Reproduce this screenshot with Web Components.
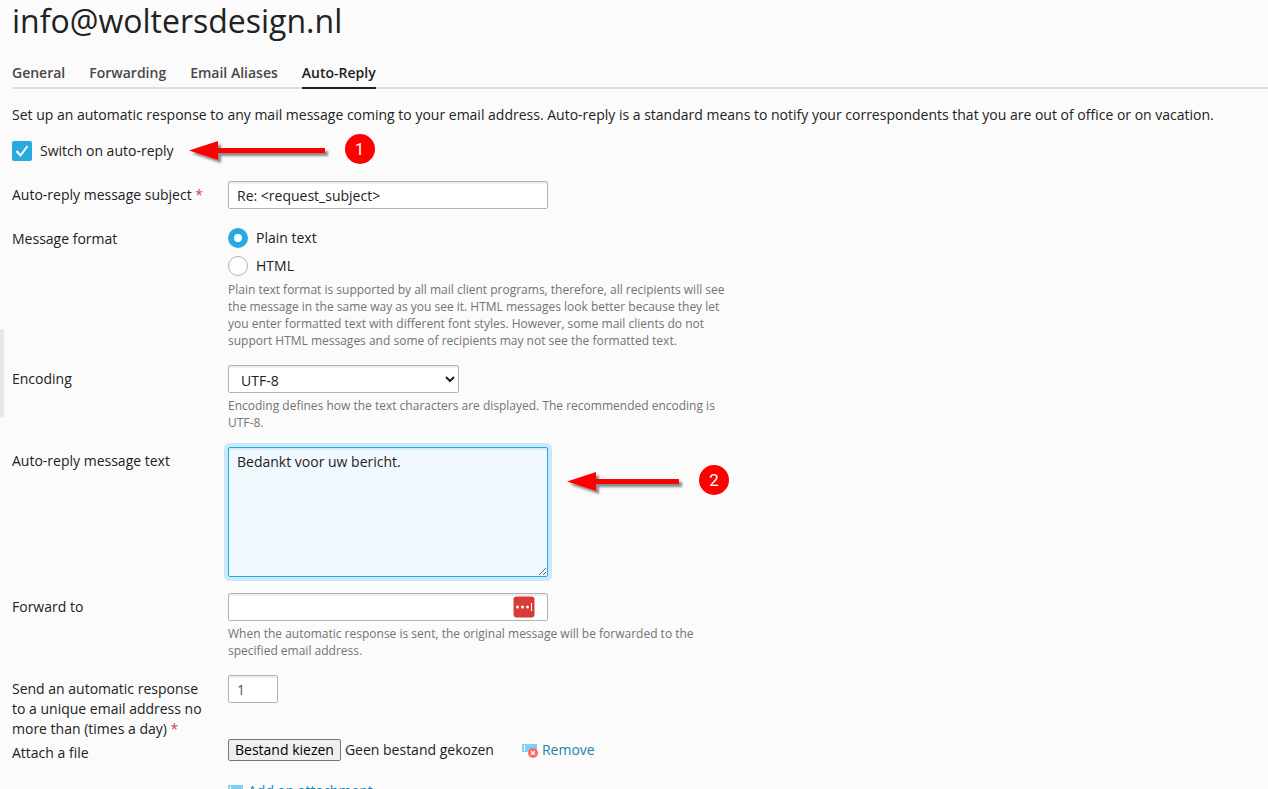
<!DOCTYPE html>
<html lang="en">
<head>
<meta charset="utf-8">
<title>info@woltersdesign.nl</title>
<style>
  body {
    margin: 0;
    background: #fbfbfb;
    color: #222;
    font: 14px/20px "Open Sans", "Noto Sans", sans-serif;
  }
</style>
</head>
<body>
<mail-settings></mail-settings>

<script>
const TABS = ["General", "Forwarding", "Email Aliases", "Auto-Reply"];

class PageTabs extends HTMLElement {
  constructor() {
    super();
    this.attachShadow({ mode: "open" });
  }

  static get styles() {
    return /* css */`
      :host {
        display: block;
      }

      nav {
        display: flex;
        gap: 24px;
        border-bottom: 2px solid #ddd;
      }

      a {
        padding-bottom: 4px;
        margin-bottom: -2px;
        border-bottom: 2px solid transparent;
        color: #484848;
        font-weight: 600;
        text-decoration: none;
      }

      a[aria-current] {
        border-color: #222;
        color: #222;
      }
    `;
  }

  connectedCallback() {
    this.render();
  }

  renderTabs() {
    const active = this.getAttribute("active");
    return TABS.map(name => /* html */`<a href="#"${name === active ? ` aria-current="page"` : ""}>${name}</a>`).join("");
  }

  render() {
    this.shadowRoot.innerHTML = /* html */`
    <style>${PageTabs.styles}</style>
    <nav>${this.renderTabs()}</nav>`;
  }
}

customElements.define("page-tabs", PageTabs);

class FormRow extends HTMLElement {
  constructor() {
    super();
    this.attachShadow({ mode: "open" });
  }

  static get styles() {
    return /* css */`
      :host {
        display: grid;
        grid-template-columns: 200px 1fr;
        column-gap: 16px;
        margin-bottom: 16px;
      }

      .label {
        padding-top: 4px;
      }

      .hint {
        max-width: 500px;
        margin-top: 4px;
        color: #737373;
        font-size: 12px;
        line-height: 17px;
      }
    `;
  }

  connectedCallback() {
    this.render();
  }

  render() {
    const hint = this.getAttribute("hint");
    this.shadowRoot.innerHTML = /* html */`
    <style>${FormRow.styles}</style>
    <div class="label"><slot name="label"></slot></div>
    <div>
      <slot></slot>
      ${hint ? `<div class="hint">${hint}</div>` : ""}
    </div>`;
  }
}

customElements.define("form-row", FormRow);

class StepMarker extends HTMLElement {
  constructor() {
    super();
    this.attachShadow({ mode: "open" });
  }

  static get styles() {
    return /* css */`
      :host {
        display: flex;
        align-items: center;
        gap: 15px;
      }

      svg {
        display: block;
      }

      .number {
        width: 30px;
        height: 30px;
        margin-bottom: 4px;
        border-radius: 50%;
        background: #f00;
        color: #fff;
        font-family: Roboto, sans-serif;
        font-size: 17px;
        line-height: 30px;
        text-align: center;
      }
    `;
  }

  connectedCallback() {
    this.render();
  }

  render() {
    const length = Number(this.getAttribute("length"));
    const width = length + 5;
    this.shadowRoot.innerHTML = /* html */`
    <style>${StepMarker.styles}</style>
    <svg width="${width}" height="26" viewBox="0 0 ${width} 26" aria-hidden="true">
      <defs>
        <filter id="shadow" x="-10%" y="-20%" width="120%" height="160%">
          <feDropShadow dx="3" dy="3" stdDeviation="1" flood-color="#000" flood-opacity=".45"/>
        </filter>
      </defs>
      <path d="M0 12.500 29 3v7h${length - 29}v5H29v7z" fill="#f00" filter="url(#shadow)"/>
    </svg>
    <div class="number">${this.getAttribute("number")}</div>`;
  }
}

customElements.define("step-marker", StepMarker);

class AttachmentLink extends HTMLElement {
  constructor() {
    super();
    this.attachShadow({ mode: "open" });
  }

  static get styles() {
    return /* css */`
      :host {
        display: block;
      }

      a {
        display: flex;
        align-items: center;
        gap: 4px;
        width: max-content;
        color: #1b82ae;
        text-decoration: none;
      }
    `;
  }

  connectedCallback() {
    this.render();
  }

  render() {
    const badge = /* html */`
      <circle cx="11" cy="11" r="5" fill="#ff6c5f"/>
      <path d="m9.200 9.200 3.600 3.600m0-3.600-3.600 3.600" stroke="#fff" stroke-width="1.400"/>`;
    this.shadowRoot.innerHTML = /* html */`
    <style>${AttachmentLink.styles}</style>
    <a href="#">
      <svg width="16" height="16" viewBox="0 0 16 16" aria-hidden="true">
        <path d="M0 2h15v8H0z" fill="#80d0f2"/>
        <path d="M2 3h1v6H2z" fill="#fff"/>
        ${this.hasAttribute("remove") ? badge : ""}
      </svg>
      <slot></slot>
    </a>`;
  }
}

customElements.define("attachment-link", AttachmentLink);

class MailSettings extends HTMLElement {
  constructor() {
    super();
    this.attachShadow({ mode: "open" });
  }

  static get styles() {
    return /* css */`
      :host {
        display: block;
        position: relative;
        box-sizing: border-box;
        height: 100vh;
        padding-left: 12px;
        overflow: hidden;
      }

      h1 {
        margin: 0 0 21px;
        font-size: 32px;
        font-weight: 400;
        line-height: 42px;
      }

      p {
        margin: 16px 0;
      }

      /* collapsed sidebar grip */
      .grip {
        position: absolute;
        top: 329px;
        left: 0;
        width: 4px;
        height: 88px;
        padding: 0;
        border: 0;
        border-radius: 0 3px 3px 0;
        background: #e6e6e6;
      }

      .switch {
        display: flex;
        align-items: center;
        gap: 15px;
        height: 20px;
        margin-bottom: 20px;
      }

      .choice {
        display: flex;
        align-items: center;
        gap: 8px;
        width: max-content;
      }

      .choices {
        display: grid;
        gap: 8px;
        padding: 3px 0 1px;
      }

      input, select, textarea {
        box-sizing: border-box;
        margin: 0;
        border: 1px solid #b3b3b3;
        border-radius: 2px;
        background: #fff;
        box-shadow: inset 0 2px 0 #eee;
        color: #222;
        font: inherit;
      }

      input[type="text"], input[type="email"] {
        display: block;
        width: 320px;
        height: 28px;
        padding: 0 8px;
      }

      input[type="text"].short {
        width: 50px;
        color: #555;
      }

      input[type="checkbox"], input[type="radio"] {
        appearance: none;
        width: 20px;
        height: 20px;
        box-shadow: none;
      }

      input[type="checkbox"]:checked {
        border: 0;
        background: #28aade url('data:image/svg+xml,<svg xmlns="http://www.w3.org/2000/svg" viewBox="0 0 20 20"><path d="m4.500 10 4 4.500L15.500 5" fill="none" stroke="white" stroke-width="2"/></svg>');
      }

      input[type="radio"] {
        border-radius: 50%;
      }

      input[type="radio"]:checked {
        border: 6px solid #28aade;
      }

      select {
        display: block;
        width: 231px;
        height: 28px;
        padding: 2px 0 0 8px;
      }

      textarea {
        display: block;
        width: 320px;
        height: 130px;
        padding: 4px 8px;
        border-color: #28aade;
        background: #f1f9ff;
        box-shadow: 0 0 0 4px #c9e8fb, inset 0 2px 0 #d3ebf7;
        outline: 0;
      }

      .message {
        display: flex;
        align-items: flex-start;
        gap: 19px;
      }

      .message step-marker {
        margin-top: 18px;
      }

      .with-icon {
        display: grid;
        grid-template-columns: 320px;
        align-items: center;
      }

      .with-icon > * {
        grid-area: 1 / 1;
      }

      .with-icon svg {
        justify-self: end;
        margin-right: 13px;
      }

      .required {
        color: #d9434e;
      }

      .tight {
        margin-bottom: 0;
      }

      .file {
        display: flex;
        align-items: center;
        gap: 4px;
        height: 22px;
      }

      .file button {
        height: 22px;
        padding: 0 6px;
        border: 1px solid #767676;
        border-radius: 2px;
        background: #efefef;
        color: #000;
        font: inherit;
      }

      .file attachment-link {
        margin-left: 24px;
      }

      .add {
        margin-top: 20px;
      }
    `;
  }

  connectedCallback() {
    this.render();
  }

  render() {
    this.shadowRoot.innerHTML = /* html */`
    <style>${MailSettings.styles}</style>
    <button class="grip" type="button" aria-label="Show sidebar"></button>
    <h1>info@woltersdesign.nl</h1>
    <page-tabs active="Auto-Reply"></page-tabs>
    <p>Set up an automatic response to any mail message coming to your email address. Auto-reply is a standard means to notify your correspondents that you are out of office or on vacation.</p>
    <form>
      <div class="switch">
        <label class="choice"><input type="checkbox" checked>Switch on auto-reply</label>
        <step-marker number="1" length="136"></step-marker>
      </div>

      <form-row>
        <label slot="label" for="subject">Auto-reply message subject <span class="required">*</span></label>
        <input type="text" id="subject" value="Re: &lt;request_subject&gt;">
      </form-row>

      <form-row hint="Plain text format is supported by all mail client programs, therefore, all recipients will see the message in the same way as you see it. HTML messages look better because they let you enter formatted text with different font styles. However, some mail clients do not support HTML messages and some of recipients may not see the formatted text.">
        <span slot="label" id="format">Message format</span>
        <div class="choices" role="radiogroup" aria-labelledby="format">
          <label class="choice"><input type="radio" name="format" checked>Plain text</label>
          <label class="choice"><input type="radio" name="format">HTML</label>
        </div>
      </form-row>

      <form-row hint="Encoding defines how the text characters are displayed. The recommended encoding is UTF-8.">
        <label slot="label" for="encoding">Encoding</label>
        <select id="encoding"><option>UTF-8</option></select>
      </form-row>

      <form-row>
        <label slot="label" for="text">Auto-reply message text</label>
        <div class="message">
          <textarea id="text">Bedankt voor uw bericht.</textarea>
          <step-marker number="2" length="112"></step-marker>
        </div>
      </form-row>

      <form-row hint="When the automatic response is sent, the original message will be forwarded to the specified email address.">
        <label slot="label" for="forward">Forward to</label>
        <div class="with-icon">
          <input type="email" id="forward">
          <svg width="22" height="22" viewBox="0 0 22 22" aria-hidden="true">
            <rect x=".5" y=".5" width="21" height="21" rx="3" fill="#d93b3b"/>
            <g fill="#fff">
              <circle cx="4.500" cy="11" r="1.500"/>
              <circle cx="9.500" cy="11" r="1.500"/>
              <circle cx="14.500" cy="11" r="1.500"/>
              <path d="M18 7h1v8h-1z"/>
            </g>
          </svg>
        </div>
      </form-row>

      <form-row class="tight">
        <label slot="label" for="limit">Send an automatic response to a unique email address no more than (times a day) <span class="required">*</span></label>
        <input type="text" class="short" id="limit" value="1">
      </form-row>

      <form-row>
        <label slot="label" for="file">Attach a file</label>
        <div class="file">
          <button type="button" id="file">Bestand kiezen</button>
          <span>Geen bestand gekozen</span>
          <attachment-link remove>Remove</attachment-link>
        </div>
        <attachment-link class="add">Add an attachment</attachment-link>
      </form-row>
    </form>`;
  }
}

customElements.define("mail-settings", MailSettings);
</script>
</body>
</html>
